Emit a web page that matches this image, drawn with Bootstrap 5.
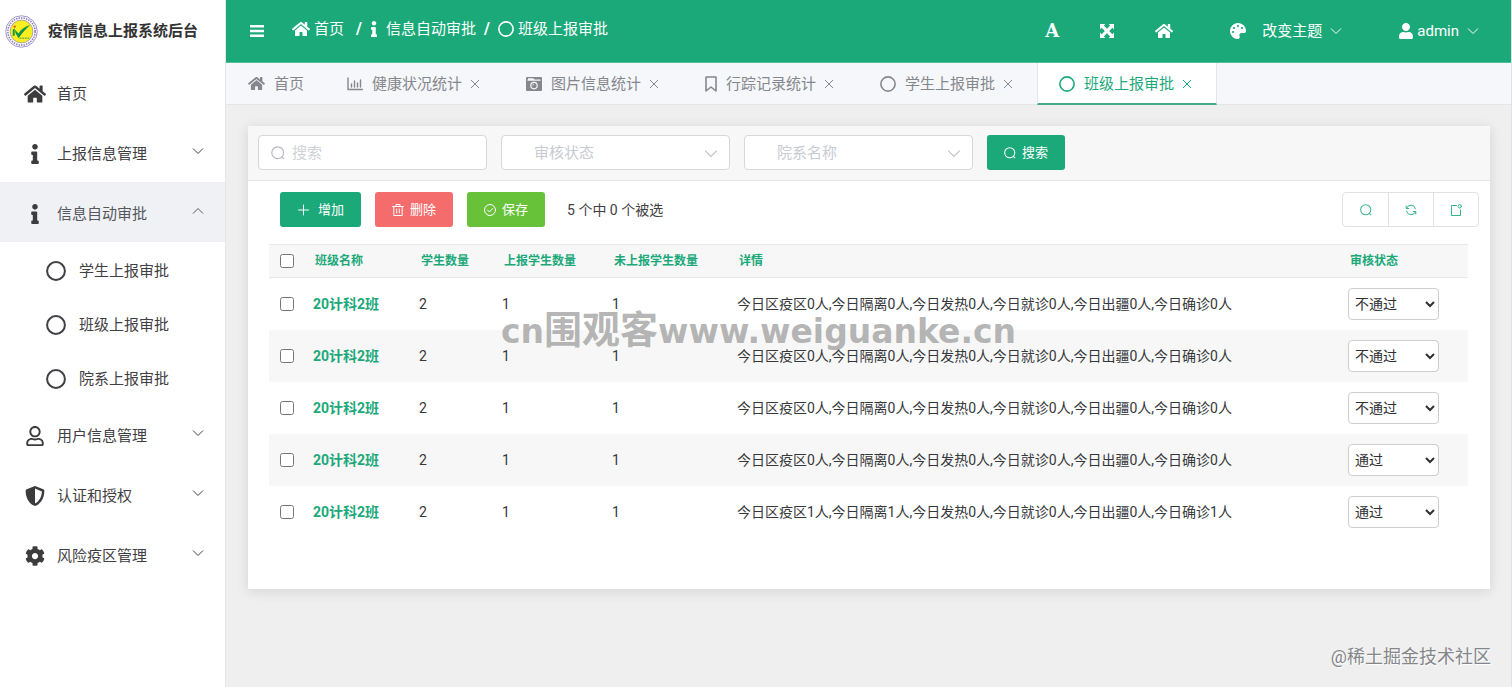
<!DOCTYPE html>
<html lang="zh-CN">
<head>
<meta charset="utf-8">
<meta name="viewport" content="width=device-width, initial-scale=1">
<title>疫情信息上报系统后台</title>
<link rel="stylesheet" href="https://cdn.jsdelivr.net/npm/bootstrap@5.3.0/dist/css/bootstrap.min.css">
<style>
:root { --brand: #1ba97a; --ink: #3f4043; --line: #e4e5e7; }
body { font-family: Roboto, "Noto Sans CJK SC", sans-serif; font-size: 15px; line-height: 20px; color: var(--ink); background: #efefef; }
a { color: inherit; text-decoration: none; }
svg { display: block; flex: none; fill: currentColor; }
.stroke-icon { fill: none; stroke: currentColor; stroke-linecap: round; stroke-linejoin: round; }
.side { width: 226px; background: #fff; border-right: 1px solid var(--line); }
.side-brand { height: 62px; padding-left: 5px; gap: 10px; color: #333; }
.side-link { height: 60px; padding: 3px 21px 0 24px; }
.side-link.open { background: #f0f1f5; color: #55575c; }
.side-link .slot { width: 21px; margin-right: 12px; display: flex; justify-content: center; color: #3c3c3f; }
.side-link .arrow { margin-left: auto; margin-bottom: 6px; }
.side-sub { height: 54px; padding: 3px 0 0 46px; gap: 13px; }
.topbar { height: 63px; background: var(--brand); color: #fff; padding: 0 32px 0 24px; border-bottom: 1px solid #54bd99; }
.topbar button, .tab-item button { background: none; border: 0; padding: 0; color: inherit; }
.crumbs { margin: 0 0 5px 28px; }
.crumb-sep { font-weight: 700; font-size: 16px; }
.topbar-tools { gap: 40px; }
.topbar-tools .menu-btn { margin-left: 17px; }
.letter-icon { font: 700 18px/20px "DejaVu Serif", serif; }
.tabs { height: 42px; background: #f5f7fa; border-bottom: 1px solid var(--line); color: #85878c; }
.tab-item { padding: 0 24px 0 21px; border-left: 1px solid transparent; }
.tab-item:first-child { padding-right: 21px; }
.tab-item .label { margin: 0 8px 0 9px; }
.tab-item.current { background: #fff; color: var(--brand); border-left: 1px solid var(--line); border-right: 1px solid var(--line); border-bottom: 2px solid #45ab88; margin-bottom: -1px; padding-top: 2px; }
.panel { margin: 21px 21px 0 22px; padding-bottom: 51px; background: #fff; box-shadow: 0 2px 12px rgba(0,0,0,.12); }
.filters { height: 55px; padding: 9px 10px 10px; gap: 14px; background: #f7f7f7; border-bottom: 1px solid var(--line); }
.field { width: 229px; }
.field .form-control, .field .form-select { height: 35px; font-size: 15px; border-color: #d6d8dc; border-radius: 4px; color: #c8cbd1; padding: 1px 32px 0; }
.field .form-control { padding: 0 10px 0 33px; }
.field .form-control::placeholder { color: #cfd2d7; }
.field .form-select { background-size: 14px 14px; background-position: right 11px center; background-image: url("data:image/svg+xml,%3Csvg xmlns='http://www.w3.org/2000/svg' viewBox='0 0 12 12'%3E%3Cpath d='M1 4l5 5 5-5' fill='none' stroke='%23bfc2c8'/%3E%3C/svg%3E"); }
.field-icon { position: absolute; left: 13px; top: 11px; color: #b7bac0; }
.act { height: 35px; border: 0; border-radius: 3px; color: #fff; font-size: 13px; line-height: 20px; padding: 0 17px; display: flex; align-items: center; gap: 6px; }
.act:hover { color: #fff; opacity: .9; }
.act-brand { background: var(--brand); }
.act-red { background: #f56c6c; }
.act-green { background: #67c23a; }
.tools { padding: 11px 11px 0 32px; gap: 14px; }
.picked { font-size: 14px; }
.tool-group { border: 1px solid #e0e2e6; border-radius: 4px; }
.tool-group button { width: 45px; height: 33px; background: none; border: 0; color: #35b48b; display: flex; align-items: center; justify-content: center; }
.tool-group button + button { border-left: 1px solid #e0e2e6; }
.grid-wrap { margin: 17px 22px 0 21px; }
.grid { table-layout: fixed; width: 100%; font-size: 14px; color: #36373a; }
.grid th { height: 33px; padding: 0 0 0 12px; font-size: 12px; color: var(--brand); background: #f7f7f7; border-top: 1px solid #e8e8e9; border-bottom: 1px solid #e8e8e9; white-space: nowrap; }
.grid td { height: 52px; padding: 0 0 0 10px; white-space: nowrap; }
.grid tbody tr { vertical-align: middle; }
.grid tbody tr:nth-child(even) { background: #f7f7f7; }
.grid th:first-child, .grid td:first-child { padding-left: 11px; }
.grid td a { color: var(--brand); font-weight: 700; }
.grid input { width: 14px; height: 14px; margin: 0; display: block; }
.grid select { width: 91px; height: 32px; border: 1px solid #ccced2; border-radius: 4px; background: #fff; padding: 0 2px; font-size: 14px; color: #2f3033; display: block; }
.wm-center { position: absolute; left: 275px; top: 308px; font: 700 33px/48px "DejaVu Sans", "Noto Sans CJK SC", sans-serif; color: rgba(150,150,150,.7); white-space: nowrap; pointer-events: none; }
.wm-center span { font-size: 38px; line-height: 40px; }
.wm-corner { position: absolute; right: 20px; bottom: 20px; font-size: 18px; color: #858689; text-shadow: 1px 1px 1px #fff; pointer-events: none; }
</style>
</head>
<body>
<svg width="0" height="0" class="position-absolute" aria-hidden="true">
  <symbol id="i-home" viewBox="0 0 576 512"><path d="M280.37 148.26L96 300.11V464a16 16 0 0 0 16 16l112.06-.29a16 16 0 0 0 15.92-16V368a16 16 0 0 1 16-16h64a16 16 0 0 1 16 16v95.64a16 16 0 0 0 16 16.05L464 480a16 16 0 0 0 16-16V300L295.67 148.26a12.19 12.19 0 0 0-15.3 0zM571.6 251.47L488 182.56V44.05a12 12 0 0 0-12-12h-56a12 12 0 0 0-12 12v72.61L318.47 43a48 48 0 0 0-61 0L4.34 251.47a12 12 0 0 0-1.6 16.9l25.5 31A12 12 0 0 0 45.15 301l235.22-193.74a12.19 12.19 0 0 1 15.3 0L530.9 301a12 12 0 0 0 16.9-1.6l25.5-31a12 12 0 0 0-1.7-16.93z"/></symbol>
  <symbol id="i-info" viewBox="0 0 192 512"><path d="M20 424.229h20V279.771H20c-11.046 0-20-8.954-20-20V212c0-11.046 8.954-20 20-20h112c11.046 0 20 8.954 20 20v212.229h20c11.046 0 20 8.954 20 20V492c0 11.046-8.954 20-20 20H20c-11.046 0-20-8.954-20-20v-47.771c0-11.046 8.954-20 20-20zM96 0C56.235 0 24 32.235 24 72s32.235 72 72 72 72-32.235 72-72S135.764 0 96 0z"/></symbol>
  <symbol id="i-user" viewBox="0 0 448 512"><path d="M224 256c70.7 0 128-57.3 128-128S294.7 0 224 0 96 57.3 96 128s57.3 128 128 128zm89.6 32h-16.7c-22.2 10.2-46.9 16-72.9 16s-50.6-5.8-72.9-16h-16.7C60.2 288 0 348.2 0 422.4V464c0 26.5 21.5 48 48 48h352c26.5 0 48-21.5 48-48v-41.6c0-74.2-60.2-134.4-134.4-134.4z"/></symbol>
  <symbol id="i-user-o" viewBox="0 0 448 512"><path d="M313.6 304c-28.7 0-42.5 16-89.6 16s-60.8-16-89.6-16C60.2 304 0 364.2 0 438.4V464c0 26.5 21.5 48 48 48h352c26.5 0 48-21.5 48-48v-25.6c0-74.2-60.2-134.4-134.4-134.4zM400 464H48v-25.6c0-47.6 38.8-86.4 86.4-86.4 14.6 0 38.3 16 89.6 16 51.7 0 74.9-16 89.6-16 47.6 0 86.4 38.8 86.4 86.4V464zM224 288c79.5 0 144-64.5 144-144S303.5 0 224 0 80 64.5 80 144s64.5 144 144 144zm0-240c52.9 0 96 43.1 96 96s-43.1 96-96 96-96-43.1-96-96 43.1-96 96-96z"/></symbol>
  <symbol id="i-shield" viewBox="0 0 512 512"><path d="M466.5 83.7l-192-80a48.15 48.15 0 0 0-36.9 0l-192 80C27.7 91.1 16 108.6 16 128c0 198.5 114.5 335.7 221.5 380.3 11.8 4.9 25.1 4.9 36.9 0C360.1 472.6 496 349.3 496 128c0-19.4-11.7-36.9-29.5-44.3zM256.1 446.3l-.1-381 175.9 73.3c-3.3 151.4-82.1 261.1-175.8 307.7z"/></symbol>
  <symbol id="i-cog" viewBox="0 0 512 512"><path d="M487.4 315.7l-42.6-24.6c4.3-23.2 4.3-47 0-70.2l42.6-24.6c4.9-2.8 7.1-8.6 5.5-14-11.1-35.6-30-67.8-54.7-94.6-3.8-4.1-10-5.1-14.8-2.3L380.8 110c-17.9-15.4-38.5-27.3-60.8-35.1V25.8c0-5.6-3.9-10.5-9.4-11.7-36.7-8.2-74.3-7.8-109.2 0-5.5 1.2-9.4 6.1-9.4 11.7V75c-22.2 7.9-42.8 19.8-60.8 35.1L88.7 85.5c-4.9-2.8-11-1.9-14.8 2.3-24.7 26.7-43.6 58.9-54.7 94.6-1.7 5.4.6 11.2 5.5 14L67.3 221c-4.3 23.2-4.3 47 0 70.2l-42.6 24.6c-4.9 2.8-7.1 8.6-5.5 14 11.1 35.6 30 67.8 54.7 94.6 3.8 4.1 10 5.1 14.8 2.3l42.6-24.6c17.9 15.4 38.5 27.3 60.8 35.1v49.2c0 5.6 3.9 10.5 9.4 11.7 36.7 8.2 74.3 7.8 109.2 0 5.5-1.2 9.4-6.1 9.4-11.7v-49.2c22.2-7.9 42.8-19.8 60.8-35.1l42.6 24.6c4.9 2.8 11 1.9 14.8-2.3 24.7-26.7 43.6-58.9 54.7-94.6 1.5-5.5-.7-11.3-5.6-14.1zM256 336c-44.1 0-80-35.9-80-80s35.9-80 80-80 80 35.900 80 80-35.900 80-80 80z"/></symbol>
  <symbol id="i-palette" viewBox="0 0 512 512"><path d="M204.3 5C104.9 24.4 24.8 104.3 5.2 203.4c-37 187 131.7 326.4 258.8 306.7 41.2-6.4 61.4-54.6 42.5-91.7-23.1-45.4 9.9-98.4 60.9-98.4h79.7c35.8 0 64.8-29.6 64.9-65.3C511.5 97.1 368.1-26.9 204.3 5zM96 320c-17.7 0-32-14.3-32-32s14.3-32 32-32 32 14.3 32 32-14.3 32-32 32zm32-128c-17.7 0-32-14.3-32-32s14.3-32 32-32 32 14.3 32 32-14.3 32-32 32zm128-64c-17.7 0-32-14.3-32-32s14.3-32 32-32 32 14.3 32 32-14.3 32-32 32zm128 64c-17.7 0-32-14.3-32-32s14.3-32 32-32 32 14.3 32 32-14.3 32-32 32z"/></symbol>
  <symbol id="i-ring" viewBox="0 0 20 20"><circle cx="10" cy="10" r="8.9" fill="none" stroke="currentColor" stroke-width="2"/></symbol>
  <symbol id="i-down" viewBox="0 0 12 12"><path d="M1 3.5l5 5 5-5" fill="none" stroke="currentColor"/></symbol>
  <symbol id="i-up" viewBox="0 0 12 12"><path d="M1 8.5l5-5 5 5" fill="none" stroke="currentColor"/></symbol>
  <symbol id="i-close" viewBox="0 0 10 10"><path d="M1 1l8 8M9 1l-8 8" fill="none" stroke="currentColor"/></symbol>
  <symbol id="i-search" viewBox="0 0 14 14"><path d="M10.8 10.8L13 13" fill="none" stroke="currentColor" stroke-width="1.2"/><circle cx="6.7" cy="6.7" r="5.9" fill="none" stroke="currentColor" stroke-width="1.2"/></symbol>
</svg>

<div class="d-flex min-vh-100">
  <nav class="side flex-shrink-0" aria-label="主菜单">
    <div class="side-brand d-flex align-items-center fw-bold">
      <svg width="33" height="33" viewBox="0 0 34 34">
        <circle cx="17" cy="17" r="16.2" fill="#fff" stroke="#9d92c8"/>
        <circle cx="17" cy="17" r="14" fill="none" stroke="#8b82bb" stroke-width="1.600" stroke-dasharray="1.6 1"/>
        <circle cx="17" cy="17" r="11.8" fill="#f8ee20" stroke="#8d80bd" stroke-width=".7"/>
        <path d="M10 15l4 4c2-4 6-7 12-9-4 4-8 8-12 14l-3-5z" fill="#159447"/>
        <path d="M8 15l2-1v7l-2 1z" fill="#159447"/><circle cx="10" cy="12" r="1.2" fill="#e0502b"/>
        <path d="M15 24h10" stroke="#7fba40" stroke-width="1.5" stroke-dasharray="2 .7"/>
      </svg>
      <span>疫情信息上报系统后台</span>
    </div>
    <a href="#" class="side-link d-flex align-items-center"><span class="slot"><svg width="22" height="20"><use href="#i-home"/></svg></span>首页</a>
    <a href="#" class="side-link d-flex align-items-center"><span class="slot"><svg width="8" height="20"><use href="#i-info"/></svg></span>上报信息管理<svg class="arrow" width="12" height="12"><use href="#i-down"/></svg></a>
    <a href="#" class="side-link open d-flex align-items-center"><span class="slot"><svg width="8" height="20"><use href="#i-info"/></svg></span>信息自动审批<svg class="arrow" width="12" height="12"><use href="#i-up"/></svg></a>
    <a href="#" class="side-sub d-flex align-items-center"><svg width="20" height="20"><use href="#i-ring"/></svg>学生上报审批</a>
    <a href="#" class="side-sub d-flex align-items-center"><svg width="20" height="20"><use href="#i-ring"/></svg>班级上报审批</a>
    <a href="#" class="side-sub d-flex align-items-center"><svg width="20" height="20"><use href="#i-ring"/></svg>院系上报审批</a>
    <a href="#" class="side-link d-flex align-items-center"><span class="slot"><svg width="18" height="20"><use href="#i-user-o"/></svg></span>用户信息管理<svg class="arrow" width="12" height="12"><use href="#i-down"/></svg></a>
    <a href="#" class="side-link d-flex align-items-center"><span class="slot"><svg width="20" height="20"><use href="#i-shield"/></svg></span>认证和授权<svg class="arrow" width="12" height="12"><use href="#i-down"/></svg></a>
    <a href="#" class="side-link d-flex align-items-center"><span class="slot"><svg width="20" height="20"><use href="#i-cog"/></svg></span>风险疫区管理<svg class="arrow" width="12" height="12"><use href="#i-down"/></svg></a>
  </nav>

  <div class="flex-grow-1 position-relative border-end">
    <header class="topbar d-flex align-items-center">
      <button type="button" aria-label="折叠菜单"><svg width="14" height="14" viewBox="0 0 14 14"><path d="M0 1h14v2.400H0zM0 5.800h14v2.400H0zM0 10.600h14V13H0z"/></svg></button>
      <div class="crumbs d-flex align-items-center">
        <a href="#" class="d-flex align-items-center"><svg class="me-1" width="18" height="16"><use href="#i-home"/></svg>首页</a>
        <span class="crumb-sep ms-2 me-2 ps-1">/</span>
        <a href="#" class="d-flex align-items-center"><svg class="me-2" width="8" height="16"><use href="#i-info"/></svg>信息自动审批</a>
        <span class="crumb-sep ms-1 me-2 ps-1">/</span>
        <a href="#" class="d-flex align-items-center"><svg class="me-1" width="16" height="16"><use href="#i-ring"/></svg>班级上报审批</a>
      </div>
      <div class="topbar-tools d-flex align-items-center ms-auto">
        <button type="button" class="letter-icon" aria-label="字体">A</button>
        <button type="button" aria-label="全屏"><svg width="16" height="16" viewBox="0 0 16 16"><path d="M1 1h5.400L4.800 2.600 8 5.800l3.200-3.200L9.600 1H15v5.400l-1.600-1.600L10.200 8l3.200 3.200L15 9.600V15H9.600l1.600-1.600L8 10.200l-3.200 3.200L6.400 15H1V9.600l1.600 1.600L5.800 8 2.600 4.800 1 6.400z"/></svg></button>
        <button type="button" aria-label="首页"><svg width="18" height="16"><use href="#i-home"/></svg></button>
        <button type="button" class="menu-btn d-flex align-items-center"><svg class="me-3" width="16" height="16"><use href="#i-palette"/></svg>改变主题<svg class="ms-2" width="12" height="12"><use href="#i-down"/></svg></button>
        <button type="button" class="menu-btn d-flex align-items-center"><svg class="me-1" width="14" height="16"><use href="#i-user"/></svg>admin<svg class="ms-2" width="12" height="12"><use href="#i-down"/></svg></button>
      </div>
    </header>

    <div class="tabs d-flex">
      <div class="tab-item d-flex align-items-center"><svg width="17" height="15"><use href="#i-home"/></svg><a href="#" class="label me-0">首页</a></div>
      <div class="tab-item d-flex align-items-center"><svg class="stroke-icon" width="16" height="14" viewBox="0 0 16 14"><path d="M1 1v11.500h14.500M4.500 10V7M7.500 10V4M10.500 10V6M13.500 10V3" stroke-width="1.400"/></svg><a href="#" class="label">健康状况统计</a><button type="button" aria-label="关闭"><svg width="10" height="10"><use href="#i-close"/></svg></button></div>
      <div class="tab-item d-flex align-items-center"><svg width="16" height="14" viewBox="0 0 16 14"><path fill-rule="evenodd" d="M1 0h14a1 1 0 0 1 1 1v12a1 1 0 0 1-1 1H1a1 1 0 0 1-1-1V1a1 1 0 0 1 1-1zM1.500 3.800h13V2.600H8.500L7.200 1.300H2v1.300h-.500zM8 4.800a3.800 3.800 0 1 0 0 7.600 3.800 3.800 0 0 0 0-7.600zM8 6a2.600 2.600 0 1 1 0 5.200A2.600 2.600 0 0 1 8 6zm0 1a1.600 1.600 0 0 0-1.600 1.600h.7A.9.900 0 0 1 8 7.700z"/></svg><a href="#" class="label">图片信息统计</a><button type="button" aria-label="关闭"><svg width="10" height="10"><use href="#i-close"/></svg></button></div>
      <div class="tab-item d-flex align-items-center"><svg class="stroke-icon" width="12" height="16" viewBox="0 0 12 16"><path d="M1 1h10v14l-5-4-5 4z" stroke-width="1.600"/></svg><a href="#" class="label">行踪记录统计</a><button type="button" aria-label="关闭"><svg width="10" height="10"><use href="#i-close"/></svg></button></div>
      <div class="tab-item d-flex align-items-center"><svg width="16" height="16"><use href="#i-ring"/></svg><a href="#" class="label">学生上报审批</a><button type="button" aria-label="关闭"><svg width="10" height="10"><use href="#i-close"/></svg></button></div>
      <div class="tab-item current d-flex align-items-center"><svg width="16" height="16"><use href="#i-ring"/></svg><a href="#" class="label">班级上报审批</a><button type="button" aria-label="关闭"><svg width="10" height="10"><use href="#i-close"/></svg></button></div>
    </div>

    <main class="panel">
      <form class="filters d-flex" onsubmit="return false">
        <div class="field position-relative"><svg class="field-icon" width="14" height="14"><use href="#i-search"/></svg><input type="text" class="form-control" placeholder="搜索" aria-label="搜索"></div>
        <div class="field"><select class="form-select" aria-label="审核状态"><option>审核状态</option></select></div>
        <div class="field"><select class="form-select" aria-label="院系名称"><option>院系名称</option></select></div>
        <button type="submit" class="act act-brand"><svg width="12" height="12"><use href="#i-search"/></svg>搜索</button>
      </form>

      <div class="tools d-flex align-items-center">
        <button type="button" class="act act-brand gap-2"><svg class="stroke-icon" width="13" height="12" viewBox="0 0 12 12"><path d="M1 6h10M6 1v10"/></svg>增加</button>
        <button type="button" class="act act-red"><svg class="stroke-icon" width="12" height="12" viewBox="0 0 12 12"><path d="M.5 2.500h11M4 2.500v-2h4v2M1.800 2.500v9h8.400v-9M4.700 5v4M7.300 5v4"/></svg>删除</button>
        <button type="button" class="act act-green"><svg class="stroke-icon" width="12" height="12" viewBox="0 0 12 12"><circle cx="6" cy="6" r="5.500"/><path d="M3.500 6l2 2 3.200-3.500"/></svg>保存</button>
        <span class="picked ms-2">5 个中 0 个被选</span>
        <div class="tool-group d-flex ms-auto">
          <button type="button" aria-label="搜索"><svg width="12" height="12"><use href="#i-search"/></svg></button>
          <button type="button" aria-label="刷新"><svg class="stroke-icon" width="12" height="12" viewBox="0 0 12 12"><path d="M1.200 2v2.500h2.500M1.500 4.300A4.700 4.700 0 0 1 10.500 4.800M10.800 10V7.500H8.300M10.500 7.700A4.700 4.700 0 0 1 1.500 7.200"/></svg></button>
          <button type="button" aria-label="导出"><svg class="stroke-icon" width="12" height="12" viewBox="0 0 12 12"><path d="M6.500 1.500h-5v10h9V6"/><circle cx="9.700" cy="2.300" r="1.700"/></svg></button>
        </div>
      </div>

      <div class="grid-wrap">
        <table class="grid">
          <colgroup><col style="width:34px"><col style="width:106px"><col style="width:83px"><col style="width:110px"><col style="width:125px"><col><col style="width:130px"></colgroup>
          <thead><tr><th><input type="checkbox" aria-label="全选"></th><th>班级名称</th><th>学生数量</th><th>上报学生数量</th><th>未上报学生数量</th><th>详情</th><th>审核状态</th></tr></thead>
          <tbody>
            <tr><td><input type="checkbox" aria-label="选择"></td><td><a href="#">20计科2班</a></td><td>2</td><td>1</td><td>1</td><td>今日区疫区0人,今日隔离0人,今日发热0人,今日就诊0人,今日出疆0人,今日确诊0人</td><td><select aria-label="审核状态"><option>不通过</option><option>通过</option></select></td></tr>
            <tr><td><input type="checkbox" aria-label="选择"></td><td><a href="#">20计科2班</a></td><td>2</td><td>1</td><td>1</td><td>今日区疫区0人,今日隔离0人,今日发热0人,今日就诊0人,今日出疆0人,今日确诊0人</td><td><select aria-label="审核状态"><option>不通过</option><option>通过</option></select></td></tr>
            <tr><td><input type="checkbox" aria-label="选择"></td><td><a href="#">20计科2班</a></td><td>2</td><td>1</td><td>1</td><td>今日区疫区0人,今日隔离0人,今日发热0人,今日就诊0人,今日出疆0人,今日确诊0人</td><td><select aria-label="审核状态"><option>不通过</option><option>通过</option></select></td></tr>
            <tr><td><input type="checkbox" aria-label="选择"></td><td><a href="#">20计科2班</a></td><td>2</td><td>1</td><td>1</td><td>今日区疫区0人,今日隔离0人,今日发热0人,今日就诊0人,今日出疆0人,今日确诊0人</td><td><select aria-label="审核状态"><option>不通过</option><option selected>通过</option></select></td></tr>
            <tr><td><input type="checkbox" aria-label="选择"></td><td><a href="#">20计科2班</a></td><td>2</td><td>1</td><td>1</td><td>今日区疫区1人,今日隔离1人,今日发热0人,今日就诊0人,今日出疆0人,今日确诊1人</td><td><select aria-label="审核状态"><option>不通过</option><option selected>通过</option></select></td></tr>
          </tbody>
        </table>
      </div>
    </main>
    <div class="wm-center">cn<span>围观客</span>www.weiguanke.cn</div>
    <div class="wm-corner">@稀土掘金技术社区</div>
  </div>
</div>
<script src="https://cdn.jsdelivr.net/npm/bootstrap@5.3.0/dist/js/bootstrap.bundle.min.js"></script>
</body>
</html>
